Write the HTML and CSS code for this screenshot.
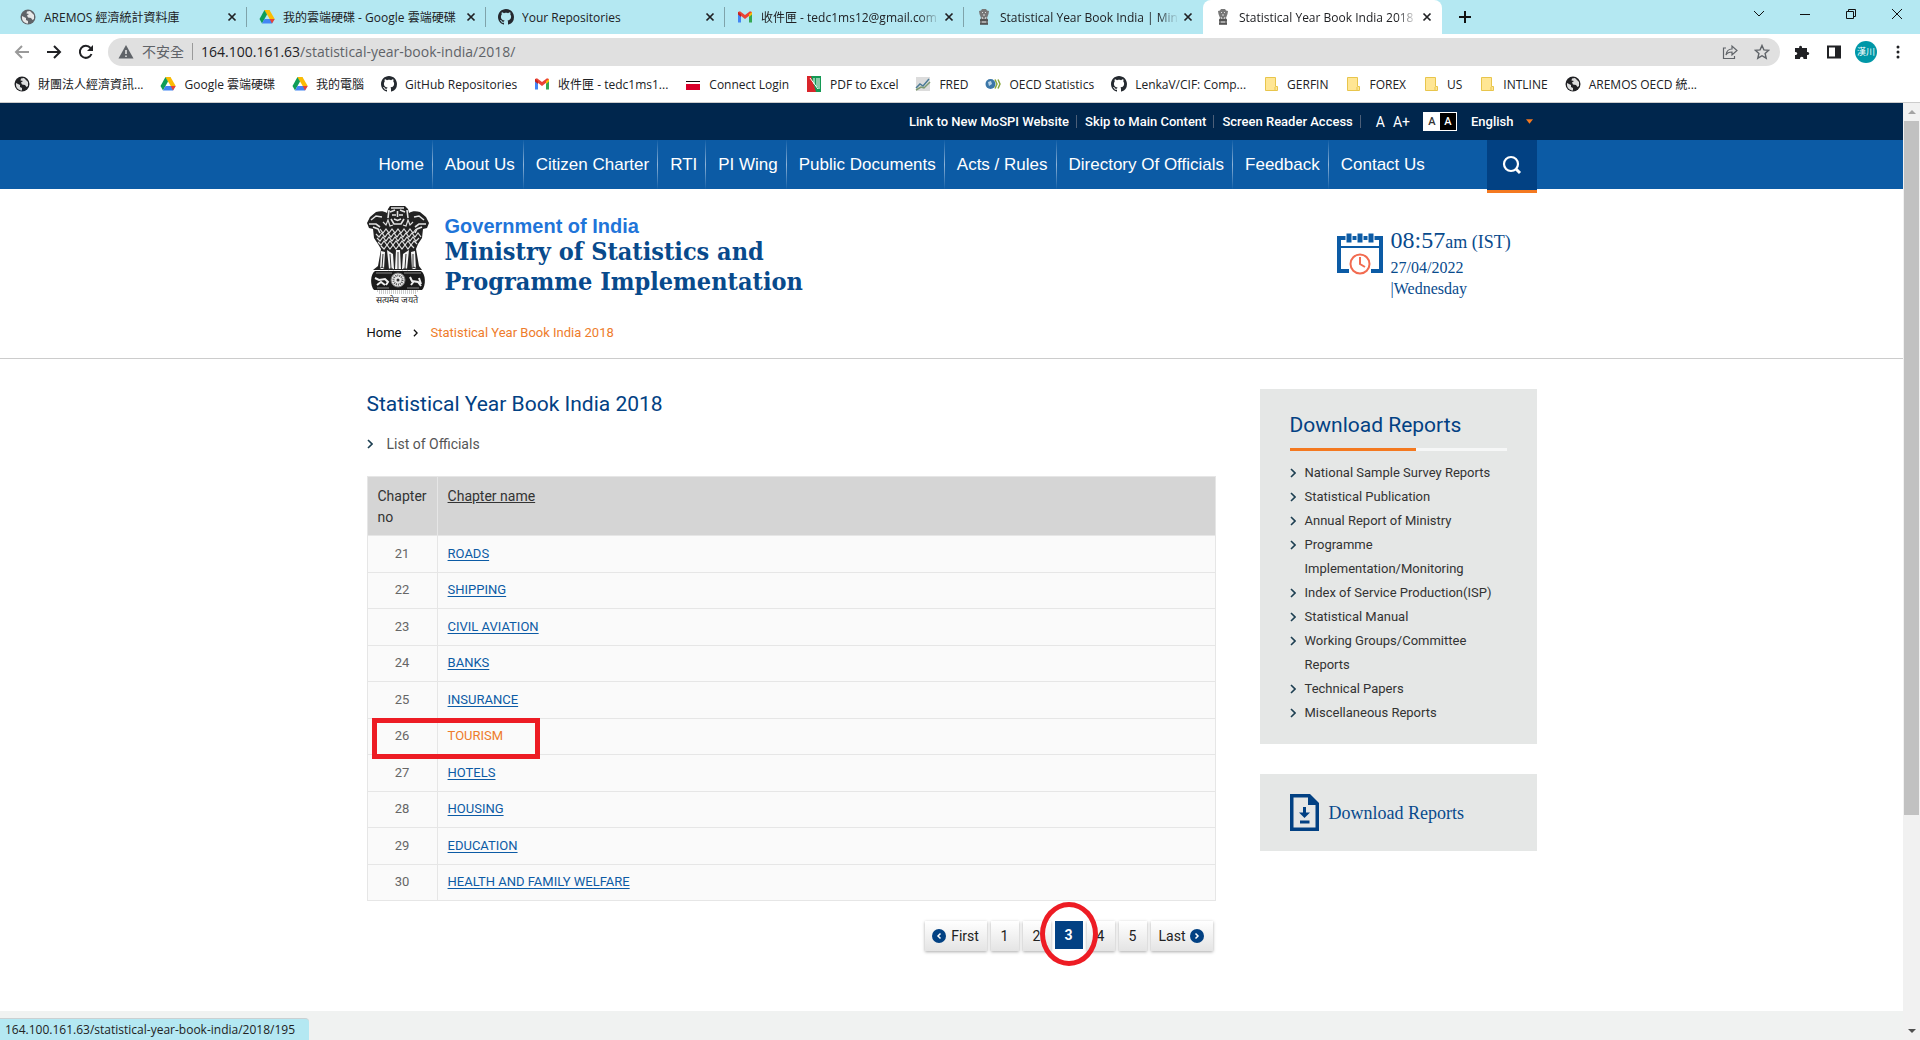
FILE: index.html
```html
<!DOCTYPE html>
<html lang="en">
<head>
<meta charset="utf-8">
<title>Statistical Year Book India 2018</title>
<link rel="stylesheet" href="styles.css">
</head>
<body>
<svg class="defs" aria-hidden="true">
  <symbol id="globe" viewBox="0 0 16 16"><circle cx="8" cy="8" r="7.500" fill="currentColor"/><path d="M2 7l4 2v2l2 1v2.500c-3 0-6-2.500-6-5.500zM7 2.500l3-.5 4 4v4l-1.500 1-1.500-2-3-.5-1-2 2-1.500-2.500-.5z" fill="#fff" opacity=".85"/></symbol>
  <symbol id="drive" viewBox="0 0 16 16"><path d="M5.500 1h5L8 5.500z" fill="#188038"/><path d="M5.500 1L0.500 10 3 14.500 8 5.500z" fill="#0f9d58"/><path d="M10.500 1h-5l5.200 9h5z" fill="#fbbc04"/><path d="M3 14.500L5.500 10h10L13 14.500z" fill="#4285f4"/><path d="M10.700 10h5L13 14.500z" fill="#ea4335"/></symbol>
  <symbol id="github" viewBox="0 0 16 16"><path fill="#24292f" d="M8 0C3.580 0 0 3.580 0 8c0 3.540 2.290 6.530 5.470 7.590.4.070.55-.17.55-.38 0-.19-.01-.82-.01-1.490-2.010.37-2.530-.49-2.690-.94-.09-.23-.48-.94-.82-1.130-.28-.15-.68-.52-.01-.53.63-.01 1.080.58 1.230.82.720 1.210 1.870.87 2.330.66.070-.52.280-.87.510-1.070-1.780-.2-3.640-.89-3.640-3.950 0-.87.310-1.590.82-2.150-.08-.2-.36-1.020.08-2.120 0 0 .67-.21 2.200.82.640-.18 1.320-.27 2-.27s1.360.09 2 .27c1.530-1.040 2.200-.82 2.200-.82.440 1.100.16 1.920.08 2.120.51.56.82 1.270.82 2.150 0 3.070-1.870 3.750-3.650 3.950.29.25.54.73.54 1.480 0 1.070-.01 1.930-.01 2.200 0 .21.15.46.55.38A8.010 8.010 0 0 0 16 8c0-4.420-3.580-8-8-8z"/></symbol>
  <symbol id="gmail" viewBox="0 0 16 16"><path d="M1 4v9.500h3V7z" fill="#4285f4"/><path d="M12 7v6.500h3V4z" fill="#34a853"/><path d="M1 4.500L8 10l7-5.500V3l-2-.7L8 6 3 2.300 1 3z" fill="#ea4335"/><path d="M1 3l3 2.200V8L1 5.500z" fill="#c5221f"/><path d="M15 3l-3 2.200V8l3-2.500z" fill="#fbbc04"/></symbol>
  <symbol id="lions" viewBox="0 0 12 16"><path d="M4 0h4l1 1.500 2 .5-.5 3L9 9l1 2v4.500H2V11l1-2L1.500 5 1 2l2-.5z" fill="#777"/><path d="M4 3l1 1M8 3L7 4M5 6h2M4 8l1 2M8 8l-1 2M4 13h4" stroke="#ddd" fill="none"/><path d="M2 11h8M2 15h8" stroke="#333"/></symbol>
  <symbol id="folder" viewBox="0 0 16 16"><path d="M2.500 1.500h10v9h2v4h-12z" fill="#ffe694" stroke="#e8c54c"/><path d="M12 14v-3" stroke="#e8c54c"/></symbol>
  <symbol id="chev" viewBox="0 0 6 10"><path d="M1 1l4 4-4 4" fill="none" stroke="currentColor" stroke-width="1.600"/></symbol>
  <symbol id="cross" viewBox="0 0 10 10"><path d="M1.500 1.500l7 7M8.500 1.500l-7 7" stroke="currentColor" stroke-width="1.700"/></symbol>
</svg>

<header class="browser">
  <div class="tabs">
    <div class="tab"><svg class="ico grey"><use href="#globe"/></svg><span class="tab-title">AREMOS 經濟統計資料庫</span><button class="close" aria-label="Close"><svg><use href="#cross"/></svg></button></div>
    <div class="tab"><svg class="ico"><use href="#drive"/></svg><span class="tab-title">我的雲端硬碟 - Google 雲端硬碟</span><button class="close" aria-label="Close"><svg><use href="#cross"/></svg></button></div>
    <div class="tab"><svg class="ico"><use href="#github"/></svg><span class="tab-title">Your Repositories</span><button class="close" aria-label="Close"><svg><use href="#cross"/></svg></button></div>
    <div class="tab"><svg class="ico"><use href="#gmail"/></svg><span class="tab-title fade">收件匣 - tedc1ms12@gmail.com</span><button class="close" aria-label="Close"><svg><use href="#cross"/></svg></button></div>
    <div class="tab before-active"><svg class="ico"><use href="#lions"/></svg><span class="tab-title fade">Statistical Year Book India | Mini</span><button class="close" aria-label="Close"><svg><use href="#cross"/></svg></button></div>
    <div class="tab active"><svg class="ico"><use href="#lions"/></svg><span class="tab-title fade">Statistical Year Book India 2018</span><button class="close" aria-label="Close"><svg><use href="#cross"/></svg></button></div>
    <button class="new-tab" aria-label="New tab"><svg viewBox="0 0 14 14"><path d="M7 1v12M1 7h12" stroke="#111" stroke-width="2"/></svg></button>
    <div class="win">
      <button aria-label="Search tabs"><svg viewBox="0 0 12 12"><path d="M1 3l5 5 5-5" fill="none" stroke="#111"/></svg></button>
      <button aria-label="Minimise"><svg viewBox="0 0 12 12"><path d="M1 6.500h10" stroke="#111"/></svg></button>
      <button aria-label="Restore"><svg viewBox="0 0 12 12"><path d="M1.500 3.500h7v7h-7zM3.500 3.500v-2h7v7h-2" fill="none" stroke="#111"/></svg></button>
      <button aria-label="Close window"><svg viewBox="0 0 12 12"><path d="M1 1l10 10M11 1L1 11" stroke="#111"/></svg></button>
    </div>
  </div>
  <div class="toolbar">
    <button class="tool" aria-label="Back"><svg viewBox="0 0 16 16"><path d="M15 8H2M8 2L2 8l6 6" fill="none" stroke="#9a9a9a" stroke-width="2"/></svg></button>
    <button class="tool" aria-label="Forward"><svg viewBox="0 0 16 16"><path d="M1 8h13M8 2l6 6-6 6" fill="none" stroke="#202124" stroke-width="2"/></svg></button>
    <button class="tool" aria-label="Reload"><svg viewBox="0 0 16 16"><path d="M13.500 10A6 6 0 1 1 12.500 4" fill="none" stroke="#202124" stroke-width="2"/><path d="M15 1v6H9z" fill="#202124"/></svg></button>
    <div class="omnibox">
      <svg class="warn" viewBox="0 0 16 16"><path d="M8 1l7.500 13.500H.5z" fill="#5f6368"/><path d="M8 6v4M8 11.500V13" stroke="#e0e0e0" stroke-width="1.600"/></svg>
      <span class="unsafe">不安全</span>
      <span class="url">164.100.161.63<i>/statistical-year-book-india/2018/</i></span>
      <svg class="omni-ico" viewBox="0 0 16 16"><path d="M4 4H1.500v10.500h11V12M4 11c.5-4 3-6 6-6V2l5 4.500L10 11V8c-3 0-5 1-6 3z" fill="none" stroke="#5f6368" stroke-width="1.200"/></svg>
      <svg class="omni-ico" viewBox="0 0 16 16"><path d="M8 1.500l1.900 4.400 4.800.4-3.600 3.200 1.100 4.700L8 11.700l-4.200 2.500 1.100-4.700L1.300 6.300l4.800-.4z" fill="none" stroke="#5f6368" stroke-width="1.400"/></svg>
    </div>
    <button class="tool" aria-label="Extensions"><svg viewBox="0 0 16 16"><path d="M1 4h4.200C4.500 1 8.500 1 8 4h5v4c3-.5 3 3.500 0 3v4H9.500c.3-3-3.800-3-3.500 0H1v-4c3 .3 3-3.300 0-3z" fill="#202124"/></svg></button>
    <button class="tool" aria-label="Side panel"><svg viewBox="0 0 16 16"><path d="M2 2.500h12v11H2z" fill="none" stroke="#202124" stroke-width="2"/><path d="M9 2h5v12H9z" fill="#202124"/></svg></button>
    <button class="avatar">漢川</button>
    <button class="tool" aria-label="Menu"><svg viewBox="0 0 16 16"><g fill="#202124"><circle cx="8" cy="3" r="1.500"/><circle cx="8" cy="8" r="1.500"/><circle cx="8" cy="13" r="1.500"/></g></svg></button>
  </div>
  <nav class="bookmarks">
    <a href="#"><svg class="ico"><use href="#globe"/></svg>財團法人經濟資訊...</a>
    <a href="#"><svg class="ico"><use href="#drive"/></svg>Google 雲端硬碟</a>
    <a href="#"><svg class="ico"><use href="#drive"/></svg>我的電腦</a>
    <a href="#"><svg class="ico"><use href="#github"/></svg>GitHub Repositories</a>
    <a href="#"><svg class="ico"><use href="#gmail"/></svg>收件匣 - tedc1ms1...</a>
    <a href="#"><svg class="ico" viewBox="0 0 16 16"><path d="M1 5.500h14" stroke="#111"/><path d="M1 8h14v6H1z" fill="#d9002a"/></svg>Connect Login</a>
    <a href="#"><svg class="ico" viewBox="0 0 16 16"><path d="M1 0h14v16H1z" fill="#149954"/><path d="M1 0h4l5 16H1z" fill="#d9252a"/><path d="M4 2l8 11M8 2v6M11 2v9M13 2v11" stroke="#fff"/></svg>PDF to Excel</a>
    <a href="#"><svg class="ico" viewBox="0 0 16 16"><path d="M1 1h14v14H1z" fill="#dcdcdc"/><path d="M1 12l4-4 3 2 6-7" fill="none" stroke="#4b7b96" stroke-width="1.500"/><path d="M1 14l5-3 3 1 6-6" fill="none" stroke="#7d9a6f" stroke-width="1.500"/></svg>FRED</a>
    <a href="#"><svg class="ico" viewBox="0 0 16 16"><circle cx="5.500" cy="8" r="5" fill="#3c77a8"/><path d="M3 6l3-1 1 3-3 2z" fill="#b9d3e6"/><path d="M10 3.500l2 4.500-2 4.500M13 3.500L15 8l-2 4.500" fill="none" stroke="#8aa83c" stroke-width="1.500"/></svg>OECD Statistics</a>
    <a href="#"><svg class="ico"><use href="#github"/></svg>LenkaV/CIF: Comp...</a>
    <a href="#"><svg class="ico"><use href="#folder"/></svg>GERFIN</a>
    <a href="#"><svg class="ico"><use href="#folder"/></svg>FOREX</a>
    <a href="#"><svg class="ico"><use href="#folder"/></svg>US</a>
    <a href="#"><svg class="ico"><use href="#folder"/></svg>INTLINE</a>
    <a href="#"><svg class="ico"><use href="#globe"/></svg>AREMOS OECD 統...</a>
  </nav>
</header>

<div class="viewport">
  <div class="page">
    <div class="topbar">
      <div class="wrap topbar-in">
        <a class="top-link" href="#">Link to New MoSPI Website</a>
        <a class="top-link" href="#">Skip to Main Content</a>
        <a class="top-link" href="#">Screen Reader Access</a>
        <span class="sizes"><a href="#">A</a><a href="#">A+</a></span>
        <span class="contrast"><button class="light">A</button><button class="dark">A</button></span>
        <button class="lang">English<svg viewBox="0 0 8 5"><path d="M0 0h8L4 5z" fill="#f47920"/></svg></button>
      </div>
    </div>
    <div class="navbar">
      <div class="wrap navbar-in">
        <nav class="menu">
          <a href="#">Home</a><a href="#">About Us</a><a href="#">Citizen Charter</a><a href="#">RTI</a><a href="#">PI Wing</a><a href="#">Public Documents</a><a href="#">Acts / Rules</a><a href="#">Directory Of Officials</a><a href="#">Feedback</a><a href="#">Contact Us</a>
        </nav>
        <button class="search" aria-label="Search"><svg viewBox="0 0 20 20"><circle cx="9" cy="9" r="7" fill="none" stroke="#fff" stroke-width="2.200"/><path d="M14 14l4 4" stroke="#fff" stroke-width="3"/></svg></button>
      </div>
    </div>
    <div class="masthead">
      <div class="wrap">
        <div class="brand-row">
          <svg class="emblem" viewBox="0 0 62 98">
            <path d="M21 3l2-3h15l3 3 1 4c3-2 7-2 11-1l6 5 3 6-2 5-4 1-1 9-4 6-2 5 3 17 3 4H6l5-4 3-17-3-5-4-6-1-9-4-1-2-5 3-6 6-5c4-1 8-1 11 1z" fill="#222"/>
            <path d="M24 2h13M23 6l5-2M38 6l-5-2M25 9h4M32 9h4M27 13l3.500 1.500L34 13M24 13l3 5h7l3-5M4 14l5-4 6 1M2 18l7 0 4 3M6 21l5 2 2 4M57 14l-5-4-5 1M59 18l-7 0-4 3M55 21l-5 2-2 4M22 4l-1 8M40 4l1 8M30.500 5v6" fill="none" stroke="#e4e4e4" stroke-width="1.600"/>
            <path d="M9 28l3 3 3-4 3 4 3-4 3 4 3-4 3 4 3-4 3 4 3-4 3 4 3-4 3 4 3-4 3 4M10 32l3 3 3-4 3 4 3-4 3 4 3-4 3 4 3-4 3 4 3-4 3 4 3-4 3 4 3-3M11 36l3 3 3-4 3 4 3-4 3 4 3-4 3 4 3-4 3 4 3-4 3 4 3-4 3 3M14 40l3 3 3-4 3 4 3-4 3 4 3-4 3 4 3-4 3 4 3-4 3 3M16 16l3 3 2-5 2 6 3-1M46 16l-3 3-2-5-2 6-3-1M13 23l3 4 3-4 3 4 3-4 3 4 3-4 3 4 3-4 3 4 3-4 3 4 3-4" fill="none" stroke="#ddd" stroke-width="1.200"/>
            <path d="M14 45l4 1-1 17h-4zM20 44l6 4 1 15h-5zM29 44h4l1 19h-6zM42 44l-6 4-1 15h5zM48 45l-4 1 1 17h4z" fill="#f4f4f4"/>
            <path d="M16 48l-1 14M23 48l1 14M31 46v17M39 48l-1 14M46 48v14M12 63l3-2 3 2M21 64l3-2 3 2M35 64l3-2 3 2M44 63l3-2 3 2" fill="none" stroke="#333"/>
            <path d="M8 65h46c5 3 5 15 1 19H7C3 80 3 68 8 65z" fill="#1b1b1b"/>
            <circle cx="31" cy="74" r="7" fill="#e8e8e8" stroke="#777"/><circle cx="31" cy="74" r="4.500" fill="none" stroke="#555" stroke-width="2" stroke-dasharray="1 1"/><circle cx="31" cy="74" r="1.500" fill="#333"/>
            <path d="M8 72l4 2 6-1 3 3-2 3M10 79l4-3 4 3M43 71l2 4 6 1 3 4M44 79l3-4M52 72l2 6" fill="none" stroke="#eee" stroke-width="2"/>
            <path d="M9 67h16M37 67h17M10 82h12M40 82h12" stroke="#888"/>
            <path d="M10 85h42M12 87h38" stroke="#999" stroke-dasharray="1 1"/>
            <text x="9" y="97" class="motto">सत्यमेव जयते</text>
          </svg>
          <div class="brand">
            <span class="gov">Government of India</span>
            <strong class="ministry">Ministry of Statistics and<br>Programme Implementation</strong>
          </div>
          <div class="clock">
            <svg viewBox="0 0 46 42"><g fill="none" stroke="#0c5ba5" stroke-width="4"><path d="M12 38H2V5h42v33H34"/><path d="M2 14h42" stroke-width="2"/></g><path d="M9 0h6v10H9zM20 0h6v10h-6zM31 0h6v10h-6z" fill="#0c5ba5" stroke="#fff"/><circle cx="23" cy="31" r="9.500" fill="#fff" stroke="#f26b50" stroke-width="2"/><path d="M23 24v7l5 3" fill="none" stroke="#f26b50" stroke-width="2"/></svg>
            <div class="clock-text"><span class="time"><b>08:57</b>am (IST)</span><span class="day">27/04/2022</span><span class="day">|Wednesday</span></div>
          </div>
        </div>
        <nav class="crumbs"><a href="#">Home</a><svg><use href="#chev"/></svg><span>Statistical Year Book India 2018</span></nav>
      </div>
    </div>
    <main class="wrap content">
      <section class="main">
        <h1>Statistical Year Book India 2018</h1>
        <p class="officials"><svg><use href="#chev"/></svg>List of Officials</p>
        <div class="table-box">
        <table>
          <thead><tr><th class="no">Chapter no</th><th><a href="#">Chapter name</a></th></tr></thead>
          <tbody>
            <tr><td>21</td><td><a href="#">ROADS</a></td></tr>
            <tr><td>22</td><td><a href="#">SHIPPING</a></td></tr>
            <tr><td>23</td><td><a href="#">CIVIL AVIATION</a></td></tr>
            <tr><td>24</td><td><a href="#">BANKS</a></td></tr>
            <tr><td>25</td><td><a href="#">INSURANCE</a></td></tr>
            <tr><td>26<span class="mark-row"></span></td><td><a class="hot" href="#">TOURISM</a></td></tr>
            <tr><td>27</td><td><a href="#">HOTELS</a></td></tr>
            <tr><td>28</td><td><a href="#">HOUSING</a></td></tr>
            <tr><td>29</td><td><a href="#">EDUCATION</a></td></tr>
            <tr><td>30</td><td><a href="#">HEALTH AND FAMILY WELFARE</a></td></tr>
          </tbody>
        </table>
        </div>
        <nav class="pager">
          <a href="#" class="wide"><svg viewBox="0 0 14 14"><circle cx="7" cy="7" r="7" fill="#024183"/><path d="M8.500 4.500L6 7l2.500 2.500" fill="none" stroke="#fff" stroke-width="1.500"/></svg>First</a>
          <a href="#">1</a><a href="#">2</a><span class="current">3<span class="mark-page"></span></span><a href="#">4</a><a href="#">5</a>
          <a href="#" class="wide">Last<svg viewBox="0 0 14 14"><circle cx="7" cy="7" r="7" fill="#024183"/><path d="M5.500 4.500L8 7 5.500 9.500" fill="none" stroke="#fff" stroke-width="1.500"/></svg></a>
        </nav>
      </section>
      <aside class="side">
        <div class="panel">
          <h2>Download Reports</h2>
          <ul>
            <li><svg><use href="#chev"/></svg><a href="#">National Sample Survey Reports</a></li>
            <li><svg><use href="#chev"/></svg><a href="#">Statistical Publication</a></li>
            <li><svg><use href="#chev"/></svg><a href="#">Annual Report of Ministry</a></li>
            <li><svg><use href="#chev"/></svg><a href="#">Programme Implementation/Monitoring</a></li>
            <li><svg><use href="#chev"/></svg><a href="#">Index of Service Production(ISP)</a></li>
            <li><svg><use href="#chev"/></svg><a href="#">Statistical Manual</a></li>
            <li><svg><use href="#chev"/></svg><a href="#">Working Groups/Committee Reports</a></li>
            <li><svg><use href="#chev"/></svg><a href="#">Technical Papers</a></li>
            <li><svg><use href="#chev"/></svg><a href="#">Miscellaneous Reports</a></li>
          </ul>
        </div>
        <a class="panel download" href="#"><svg viewBox="0 0 29 37"><path d="M0 0h20l9 9v28H0z" fill="#024183"/><path d="M3.500 3.500H18V11h7.500v22.500h-22z" fill="#e5e7e6"/><path d="M14.500 13v7" stroke="#024183" stroke-width="3"/><path d="M9 18.500h11L14.500 24z" fill="#024183"/><path d="M10 28h9.500" stroke="#024183" stroke-width="3"/></svg>Download Reports</a>
      </aside>
    </main>
    <footer class="foot"><div class="wrap thumbs"><span class="t1"></span><span class="t2"></span><span class="t3"></span><span class="t4"></span><span class="t5"></span><span class="t6"></span></div></footer>
  </div>
  <div class="scroll"><svg viewBox="0 0 8 4"><path d="M0 4h8L4 0z" fill="#a3a3a3"/></svg><div class="track"><div class="thumb"></div></div><svg viewBox="0 0 8 4"><path d="M0 0h8L4 4z" fill="#505050"/></svg></div>
  <div class="status">164.100.161.63/statistical-year-book-india/2018/195</div>
</div>
</body>
</html>
```
FILE: styles.css
```css
* { box-sizing: border-box; }
body { margin: 0; height: 100vh; display: flex; flex-direction: column; overflow: hidden; background: #fff; color: #333; font-family: Roboto, sans-serif; font-size: 13px; }
a { color: inherit; text-decoration: none; }
button { border: 0; padding: 0; background: none; font: inherit; color: inherit; }
svg { display: block; flex: none; }
.defs { position: absolute; width: 0; height: 0; }
.ico { width: 16px; height: 16px; }
.grey { color: #5f6368; }

/* browser frame */
.browser { flex: none; color: #202124; font-family: "Open Sans", "Noto Sans CJK TC", sans-serif; font-size: 12px; border-bottom: 1px solid #ccc; }
.tabs { display: flex; height: 34px; padding-left: 8px; background: #b4e8f2; }
.tab { flex: 0 1 239px; min-width: 0; display: flex; align-items: center; padding: 0 10px 0 12px; position: relative; }
.tab::after { content: ""; position: absolute; right: 0; top: 7px; height: 20px; width: 1px; background: #7fa3aa; }
.before-active::after, .active::after { display: none; }
.tab-title { flex: 1; margin: 0 4px 0 8px; overflow: hidden; white-space: nowrap; }
.fade { -webkit-mask-image: linear-gradient(90deg, #000 88%, transparent); mask-image: linear-gradient(90deg, #000 88%, transparent); }
.close svg { width: 10px; height: 10px; }
.active { background: #fff; border-radius: 8px 8px 0 0; }
.new-tab { margin-left: 16px; }
.new-tab svg { width: 14px; height: 14px; }
.win { margin-left: auto; display: flex; gap: 34px; padding: 0 17px 6px 0; }
.win svg { width: 12px; height: 12px; }
.toolbar { display: flex; align-items: center; gap: 16px; height: 35px; padding: 0 14px; }
.tool svg { width: 16px; height: 16px; }
.omnibox { flex: 1; height: 28px; margin: 0 -2px; border-radius: 14px; background: #e0e0e0; display: flex; align-items: center; padding: 0 10px; color: #5f6368; font-size: 14px; }
.warn { width: 16px; height: 16px; margin-right: 8px; }
.unsafe { padding-right: 8px; margin-right: 8px; border-right: 1px solid #9a9a9a; line-height: 17px; }
.url { flex: 1; color: #202124; }
.url i { font-style: normal; color: #5f6368; }
.omni-ico { width: 16px; height: 16px; margin-left: 16px; }
.avatar { width: 22px; height: 22px; border-radius: 50%; background: #0097a7; color: #fff; font-size: 9px; overflow: hidden; white-space: nowrap; margin: 0 -3px; }
.bookmarks { display: flex; align-items: center; gap: 17px; height: 33px; padding: 0 14px 3px; white-space: nowrap; overflow: hidden; }
.bookmarks a { display: flex; align-items: center; gap: 8px; }

/* site */
.viewport { flex: 1; min-height: 0; display: flex; position: relative; }
.page { flex: 1; overflow: hidden; }
.wrap { width: 100%; max-width: 1170px; margin: 0 auto; }
.topbar { background: #00264d; color: #fff; }
.topbar-in { display: flex; justify-content: flex-end; align-items: center; height: 37px; padding-right: 4px; font-weight: 500; }
.top-link { padding-right: 7px; margin-right: 8px; border-right: 1px solid #4d5f78; line-height: 13px; }
.sizes { display: flex; gap: 8px; margin: 0 13px 0 7px; font-size: 14px; font-weight: 400; }
.contrast { display: flex; margin-right: 14px; border: 1px solid #fff; font-size: 11px; }
.contrast button { width: 16px; height: 17px; }
.light { background: #fff; color: #333; }
.dark { background: #000; color: #fff; }
.lang { display: flex; align-items: center; gap: 12px; }
.lang svg { width: 7px; height: 5px; }
.navbar { background: #0c5ba5; color: #fff; font-family: "Liberation Sans", sans-serif; font-size: 17px; }
.navbar-in { display: flex; justify-content: space-between; height: 49px; }
.menu { display: flex; }
.menu a { padding: 0 8px 0 12px; line-height: 50px; border-right: 1px solid; border-image: linear-gradient(#0c5ba5, #8fb3d7, #0c5ba5) 1; white-space: nowrap; }
.menu a:last-child { border: 0; }
.search { width: 50px; height: 53px; display: grid; place-items: center; background: #024183; border-bottom: 3px solid #f47920; }
.search svg { width: 20px; height: 20px; }
.masthead { border-bottom: 1px solid #ccc; padding-bottom: 16px; }
.brand-row { display: flex; padding-top: 17px; }
.emblem { width: 62px; height: 98px; }
.motto { font-size: 9px; fill: #222; }
.brand { margin: 9px auto 0 16px; display: flex; flex-direction: column; }
.gov { font: bold 20px/22px "Liberation Sans", sans-serif; color: #1f75d9; }
.ministry { font: bold 25px/30px "DejaVu Serif Condensed", "DejaVu Serif", serif; font-stretch: condensed; color: #084a8c; }
.clock { display: flex; gap: 8px; width: 200px; margin-top: 19px; color: #084a8c; font: 16px/21px "Liberation Serif", serif; }
.clock > svg { width: 46px; height: 42px; margin-top: 8px; }
.clock-text { display: flex; flex-direction: column; }
.time { font-size: 18px; line-height: 30px; white-space: nowrap; }
.time b { font-weight: 400; font-size: 24px; }
.crumbs { display: flex; align-items: center; gap: 12px; margin-top: 20px; line-height: 18px; color: #111; }
.crumbs svg { width: 5px; height: 8px; }
.crumbs span { color: #ee7c2b; }
.content { display: flex; justify-content: space-between; gap: 44px; padding-top: 30px; }
.main { flex: 1; }
h1, h2 { margin: 0; font-weight: 400; font-size: 21px; line-height: 30px; color: #024183; }
.officials { display: flex; align-items: center; gap: 14px; margin: 14px 0 21px; font-size: 14px; line-height: 22px; color: #555; }
.officials svg, li svg { width: 6px; height: 10px; color: #1d3f52; }
.table-box { position: relative; }
table { width: 100%; border-collapse: collapse; background: #fafafa; }
th, td { border: 1px solid #e6e6e6; padding: 0 10px; text-align: left; font-weight: 400; }
th { background: #d5d5d5; padding: 9px 10px 7px; font-size: 14px; line-height: 21px; vertical-align: top; }
th a { text-decoration: underline; }
.no { width: 70px; }
td { padding-bottom: 2px; }
td:first-child { color: #666; text-align: center; }
tbody tr { height: 36px; }
tbody tr:nth-child(odd) { height: 37px; }
td a { color: #0c5ba5; text-decoration: underline; text-underline-offset: 2px; }
.hot { color: #ee7c2b; text-decoration: none; }
.mark-row { position: absolute; left: 5px; top: 242px; width: 168px; height: 41px; border: 5px solid #ed1c24; }
.pager { display: flex; justify-content: flex-end; gap: 4px; margin-top: 20px; padding-right: 3px; font-size: 14px; line-height: 28px; color: #222; }
.pager > * { width: 28px; height: 30px; display: flex; justify-content: center; align-items: center; background: linear-gradient(#fff, #e4e4e4); box-shadow: 0 1px 3px #aaa; }
.pager .wide { width: 62px; gap: 5px; }
.pager svg { width: 14px; height: 14px; }
.pager .current { position: relative; background: #024183; color: #fff; font-weight: 700; box-shadow: none; height: 28px; }
.mark-page { position: absolute; left: -15px; top: -19px; width: 58px; height: 64px; border: 5px solid #ed1c24; border-radius: 50%; z-index: 1; }
.side { width: 277px; }
.panel { display: block; background: #e5e7e6; padding: 21px 30px 19px; }
h2 { padding-bottom: 8px; border-bottom: 3px solid; border-image: linear-gradient(90deg, #f47920 58%, #f6f7f7 58%) 1; }
ul { list-style: none; margin: 10px 0 0; padding: 0; font-size: 13px; line-height: 24px; }
li { display: flex; gap: 9px; }
li svg { margin-top: 7px; }
.download { display: flex; align-items: center; gap: 10px; margin-top: 30px; padding: 20px 30px; font: 18px/36px "Liberation Serif", serif; color: #084a8c; }
.download svg { width: 29px; height: 37px; }
.foot { margin-top: 60px; padding-top: 30px; background: #f0f2f1; }
.thumbs { display: grid; grid-template-columns: repeat(6, 1fr); gap: 20px; height: 120px; }
.t1 { background: #55565c; } .t2 { background: #77716a; } .t3 { background: linear-gradient(90deg, #fff 45%, #7c8a3c); } .t4 { background: #6391c8; } .t5 { background: #fff; } .t6 { background: #3a34a8; }
.scroll { width: 17px; flex: none; display: flex; flex-direction: column; align-items: center; gap: 7px; padding: 7px 0; background: #f1f1f1; }
.scroll svg { width: 8px; height: 4px; }
.track { flex: 1; width: 15px; }
.thumb { height: 77%; background: #c1c1c1; }
.status { position: absolute; left: 0; bottom: 0; height: 22px; padding: 0 14px 0 5px; background: #b4e8f2; border-top: 1px solid #c9d0d2; border-radius: 0 4px 0 0; color: #222; font: 12px/21px "Open Sans", sans-serif; }
```
